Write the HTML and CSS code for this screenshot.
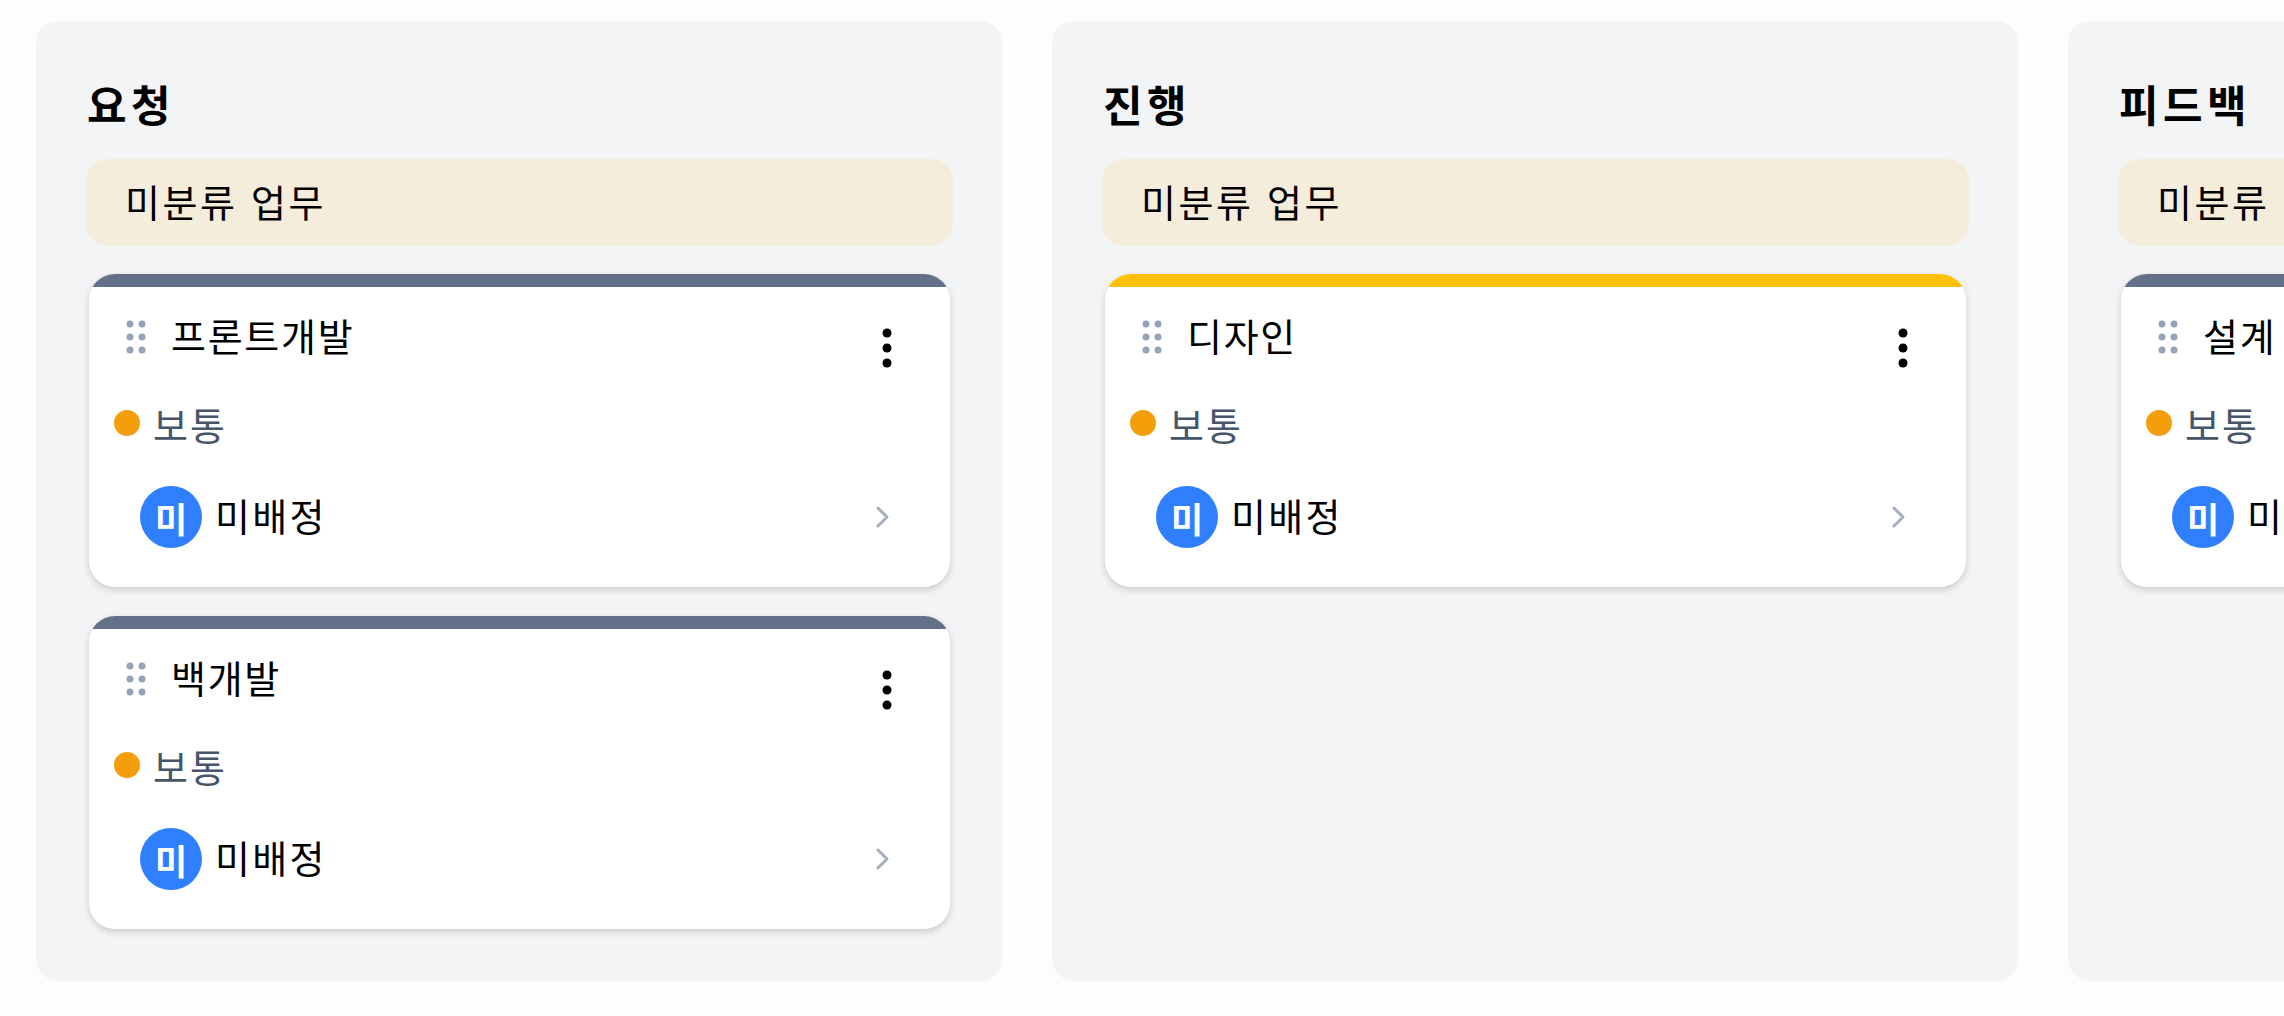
FILE: index.html
```html
<!DOCTYPE html>
<html lang="ko">
<head>
    <meta charset="UTF-8">
    <title>업무 보드</title>
    <link rel="stylesheet" href="styles.css">
</head>
<body>
    <div class="board">
        <section class="column">
            <h2 class="column-title">요청</h2>
            <div class="group-label">미분류 업무</div>
            <article class="card">
                <div class="card-bar"></div>
                <div class="card-head">
                    <svg class="grip" viewBox="0 0 20 34"><circle cx="4" cy="4" r="3.5"/><circle cx="16" cy="4" r="3.5"/><circle cx="4" cy="17" r="3.5"/><circle cx="16" cy="17" r="3.5"/><circle cx="4" cy="30" r="3.5"/><circle cx="16" cy="30" r="3.5"/></svg>
                    <span class="card-title">프론트개발</span>
                    <svg class="kebab" viewBox="0 0 12 42"><circle cx="6" cy="6" r="4.5"/><circle cx="6" cy="21" r="4.5"/><circle cx="6" cy="36" r="4.5"/></svg>
                </div>
                <div class="priority"><span class="priority-dot"></span>보통</div>
                <div class="assignee">
                    <span class="avatar">미</span>
                    <span class="assignee-name">미배정</span>
                    <svg class="chevron" viewBox="0 0 14 22"><path d="M2 2l9 9-9 9"/></svg>
                </div>
            </article>
            <article class="card">
                <div class="card-bar"></div>
                <div class="card-head">
                    <svg class="grip" viewBox="0 0 20 34"><circle cx="4" cy="4" r="3.5"/><circle cx="16" cy="4" r="3.5"/><circle cx="4" cy="17" r="3.5"/><circle cx="16" cy="17" r="3.5"/><circle cx="4" cy="30" r="3.5"/><circle cx="16" cy="30" r="3.5"/></svg>
                    <span class="card-title">백개발</span>
                    <svg class="kebab" viewBox="0 0 12 42"><circle cx="6" cy="6" r="4.5"/><circle cx="6" cy="21" r="4.5"/><circle cx="6" cy="36" r="4.5"/></svg>
                </div>
                <div class="priority"><span class="priority-dot"></span>보통</div>
                <div class="assignee">
                    <span class="avatar">미</span>
                    <span class="assignee-name">미배정</span>
                    <svg class="chevron" viewBox="0 0 14 22"><path d="M2 2l9 9-9 9"/></svg>
                </div>
            </article>
        </section>
        <section class="column">
            <h2 class="column-title">진행</h2>
            <div class="group-label">미분류 업무</div>
            <article class="card">
                <div class="card-bar card-bar-design"></div>
                <div class="card-head">
                    <svg class="grip" viewBox="0 0 20 34"><circle cx="4" cy="4" r="3.5"/><circle cx="16" cy="4" r="3.5"/><circle cx="4" cy="17" r="3.5"/><circle cx="16" cy="17" r="3.5"/><circle cx="4" cy="30" r="3.5"/><circle cx="16" cy="30" r="3.5"/></svg>
                    <span class="card-title">디자인</span>
                    <svg class="kebab" viewBox="0 0 12 42"><circle cx="6" cy="6" r="4.5"/><circle cx="6" cy="21" r="4.5"/><circle cx="6" cy="36" r="4.5"/></svg>
                </div>
                <div class="priority"><span class="priority-dot"></span>보통</div>
                <div class="assignee">
                    <span class="avatar">미</span>
                    <span class="assignee-name">미배정</span>
                    <svg class="chevron" viewBox="0 0 14 22"><path d="M2 2l9 9-9 9"/></svg>
                </div>
            </article>
        </section>
        <section class="column">
            <h2 class="column-title">피드백</h2>
            <div class="group-label">미분류 업무</div>
            <article class="card">
                <div class="card-bar"></div>
                <div class="card-head">
                    <svg class="grip" viewBox="0 0 20 34"><circle cx="4" cy="4" r="3.5"/><circle cx="16" cy="4" r="3.5"/><circle cx="4" cy="17" r="3.5"/><circle cx="16" cy="17" r="3.5"/><circle cx="4" cy="30" r="3.5"/><circle cx="16" cy="30" r="3.5"/></svg>
                    <span class="card-title">설계</span>
                    <svg class="kebab" viewBox="0 0 12 42"><circle cx="6" cy="6" r="4.5"/><circle cx="6" cy="21" r="4.5"/><circle cx="6" cy="36" r="4.5"/></svg>
                </div>
                <div class="priority"><span class="priority-dot"></span>보통</div>
                <div class="assignee">
                    <span class="avatar">미</span>
                    <span class="assignee-name">미배정</span>
                    <svg class="chevron" viewBox="0 0 14 22"><path d="M2 2l9 9-9 9"/></svg>
                </div>
            </article>
        </section>
    </div>
</body>
</html>
```

FILE: styles.css
```css
html, body {
    height: 100%;
}
body {
    margin: 0;
    overflow: hidden;
    background-color: #fdfdfd;
    color: #000;
    font-family: "Noto Sans CJK KR", "Noto Sans", sans-serif;
}
.board {
    display: flex;
    gap: 50px;
    box-sizing: border-box;
    height: 981px;
    padding: 21px 0 0 36px;
}
.column {
    flex: 0 0 966px;
    box-sizing: border-box;
    padding: 50px 49px 0 50px;
    background-color: #f3f4f6;
    border-radius: 22px;
}
.column-title {
    margin: 2px 0 26px 1px;
    font-size: 43px;
    font-weight: 700;
    letter-spacing: 4.5px;
    line-height: 60px;
}
.group-label {
    box-sizing: border-box;
    height: 87px;
    margin-bottom: 28px;
    padding-left: 39px;
    background-color: #f5eddb;
    border-radius: 22px;
    font-size: 38px;
    letter-spacing: 2.6px;
    line-height: 83px;
}
.card {
    box-sizing: border-box;
    height: 313px;
    margin: 0 3px 29px 3px;
    overflow: hidden;
    background-color: #fff;
    border-radius: 26px;
    box-shadow: 0 3px 7px rgba(0,0,0,0.17);
}
.card-bar {
    height: 13px;
    margin-bottom: 25px;
    background-color: #64708a;
}
.card-bar-design {
    background-color: #ffc107;
}
.card-head {
    display: flex;
    align-items: flex-start;
    height: 60px;
    padding: 0 57px 0 37px;
}
.grip {
    flex: none;
    width: 20px;
    height: 34px;
    margin: 8px 25px 0 0;
    fill: #94a3b8;
}
.card-title {
    flex: 1;
    margin-top: -1px;
    font-size: 38px;
    letter-spacing: 1.7px;
    line-height: 48px;
}
.kebab {
    flex: none;
    width: 12px;
    height: 42px;
    margin-top: 15px;
}
.priority {
    display: flex;
    align-items: center;
    gap: 13px;
    height: 48px;
    margin-top: 27px;
    padding-left: 25px;
    color: #475569;
    font-size: 38px;
    letter-spacing: 2px;
    line-height: 41px;
}
.priority-dot {
    width: 26px;
    height: 26px;
    background-color: #f59e0b;
    border-radius: 50%;
}
.assignee {
    display: flex;
    align-items: center;
    gap: 13px;
    height: 62px;
    margin-top: 39px;
    padding: 0 60px 0 51px;
    font-size: 38px;
    letter-spacing: 2.3px;
}
.avatar {
    display: flex;
    align-items: center;
    justify-content: center;
    width: 62px;
    height: 62px;
    background-color: #2f7fff;
    border-radius: 50%;
    color: #fff;
    font-size: 35px;
    font-weight: 700;
    letter-spacing: 0;
}
.assignee-name {
    flex: 1;
    margin-top: -5px;
}
.chevron {
    width: 14px;
    height: 22px;
    fill: none;
    stroke: #a3afc2;
    stroke-width: 3;
    stroke-linecap: round;
    stroke-linejoin: round;
}
```
